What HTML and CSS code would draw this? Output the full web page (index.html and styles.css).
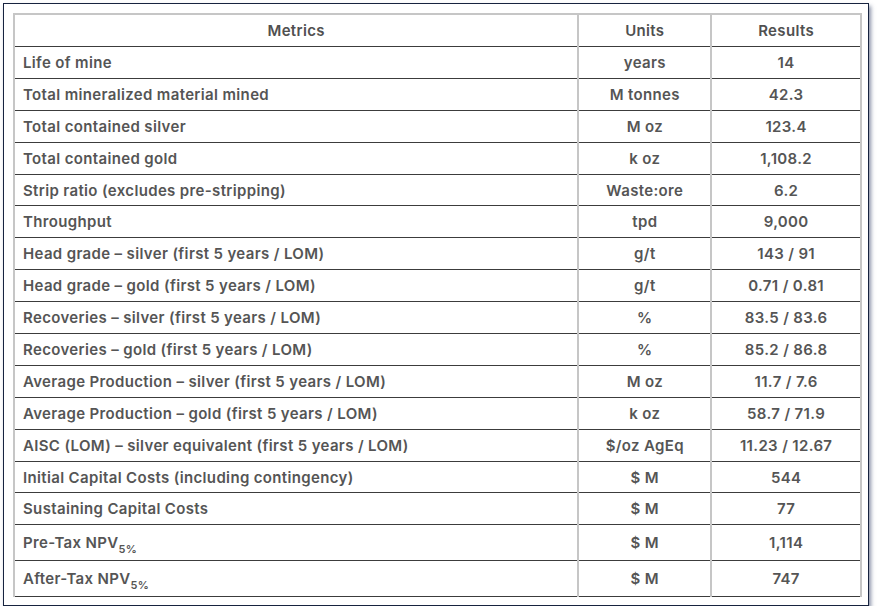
FILE: index.html
```html
<!DOCTYPE html>
<html>
<head>
<meta charset="utf-8">
<link rel="stylesheet" href="styles.css">
</head>
<body>
<div class="frame">
<table class="metrics">
<colgroup><col class="c1"><col class="c2"><col class="c3"></colgroup>
<thead>
<tr><th>Metrics</th><th>Units</th><th>Results</th></tr>
</thead>
<tbody>
<tr><td>Life of mine</td><td>years</td><td>14</td></tr>
<tr><td>Total mineralized material mined</td><td>M tonnes</td><td>42.3</td></tr>
<tr><td>Total contained silver</td><td>M oz</td><td>123.4</td></tr>
<tr><td>Total contained gold</td><td>k oz</td><td>1,108.2</td></tr>
<tr><td>Strip ratio (excludes pre-stripping)</td><td>Waste:ore</td><td>6.2</td></tr>
<tr><td>Throughput</td><td>tpd</td><td>9,000</td></tr>
<tr><td>Head grade – silver (first 5 years / LOM)</td><td>g/t</td><td>143 / 91</td></tr>
<tr><td>Head grade – gold (first 5 years / LOM)</td><td>g/t</td><td>0.71 / 0.81</td></tr>
<tr><td>Recoveries – silver (first 5 years / LOM)</td><td>%</td><td>83.5 / 83.6</td></tr>
<tr><td>Recoveries – gold (first 5 years / LOM)</td><td>%</td><td>85.2 / 86.8</td></tr>
<tr><td>Average Production – silver (first 5 years / LOM)</td><td>M oz</td><td>11.7 / 7.6</td></tr>
<tr><td>Average Production – gold (first 5 years / LOM)</td><td>k oz</td><td>58.7 / 71.9</td></tr>
<tr><td>AISC (LOM) – silver equivalent (first 5 years / LOM)</td><td>$/oz AgEq</td><td>11.23 / 12.67</td></tr>
<tr><td>Initial Capital Costs (including contingency)</td><td>$ M</td><td>544</td></tr>
<tr><td>Sustaining Capital Costs</td><td>$ M</td><td>77</td></tr>
<tr class="tall"><td>Pre-Tax NPV<sub>5%</sub></td><td>$ M</td><td>1,114</td></tr>
<tr class="tall"><td>After-Tax NPV<sub>5%</sub></td><td>$ M</td><td>747</td></tr>
</tbody>
</table>
</div>
</body>
</html>
```
FILE: styles.css
```css
html, body {
  margin: 0;
  padding: 0;
  background: #ffffff;
}
.frame {
  margin: 3px 0 0 3px;
  border: 1px solid #17233f;
  box-shadow: 2px 3px 4px rgba(40, 55, 95, 0.55);
  padding: 9px 0 0 9px;
  box-sizing: border-box;
  width: 866px;
  height: 603px;
}
.metrics {
  border-collapse: collapse;
  width: 849px;
  font-family: "Inter", "Liberation Sans", sans-serif;
  font-weight: 600;
  font-size: 15px;
  color: #555555;
  letter-spacing: 0.35px;
}
.c1 { width: 566px; }
.c2 { width: 133px; }
.c3 { width: 150px; }
.metrics th,
.metrics td {
  border-left: 2px solid #c6c6c6;
  border-right: 2px solid #c6c6c6;
  border-bottom: 1px solid #3c3c3c;
  padding: 0 8px;
  text-align: center;
}
.metrics th {
  border-top: 2px solid #c6c6c6;
  height: 31px;
  font-weight: 600;
  color: #505050;
}
.metrics td {
  height: 30.9px;
}
.metrics td:first-child {
  text-align: left;
}
.metrics tr.tall td {
  height: 35px;
}
.metrics sub {
  font-size: 11px;
  vertical-align: -5px;
  line-height: 0;
  letter-spacing: 0.2px;
}
```
